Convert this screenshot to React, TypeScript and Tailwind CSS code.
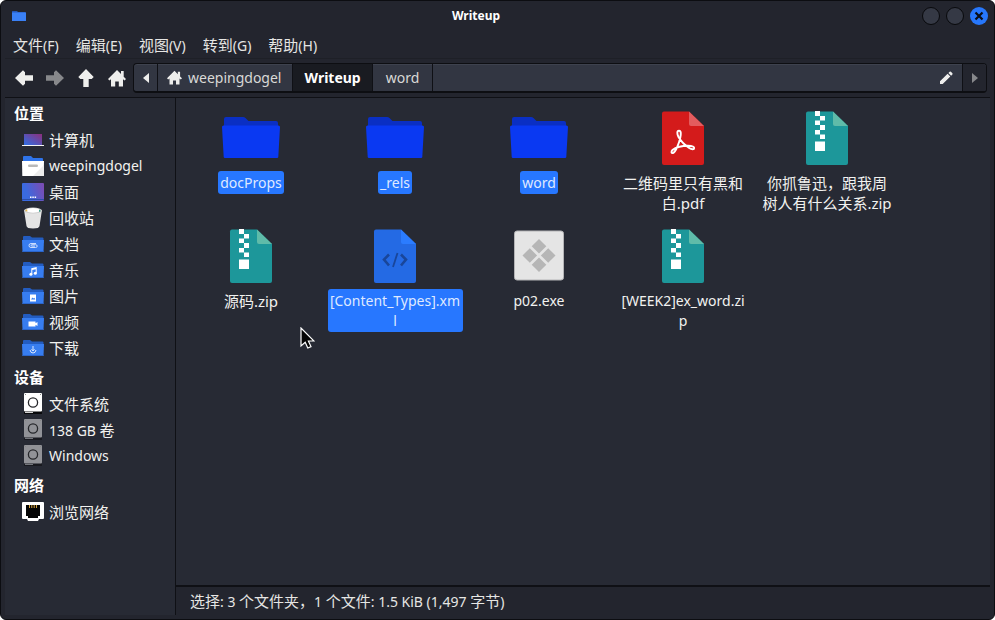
import React from "react";

const CJK = /([\u2e80-\u9fff\uff00-\uffef]+)/;

/** Latin runs use the base size, Chinese runs are one step larger. */
function Mixed({ text }: { text: string }) {
  return (
    <>
      {text.split(CJK).map((part, i) =>
        CJK.test(part) ? (
          <span key={i} className="text-[15px]">
            {part}
          </span>
        ) : (
          part
        ),
      )}
    </>
  );
}

/* ---------- toolbar icons ---------- */

function ArrowIcon({ dir }: { dir: "left" | "right" }) {
  return (
    <svg width="18" height="16" viewBox="0 0 18 16" fill="currentColor">
      <path
        d={
          dir === "left"
            ? "M0 8 8 .3l2 2v3h8v5.4h-8v3l-2 2z"
            : "M18 8 10 .3l-2 2v3H0v5.4h8v3l2 2z"
        }
      />
    </svg>
  );
}

function UpIcon() {
  return (
    <svg width="16" height="18" viewBox="0 0 16 18" fill="currentColor">
      <path d="M8 0l7.7 8-2 2h-3v8H5.3v-8h-3l-2-2z" />
    </svg>
  );
}

function HomeIcon({ size }: { size: number }) {
  return (
    <svg width={size} height={size} viewBox="0 0 18 18" fill="currentColor">
      <path d="M9 1 0 10l1.4 1.4L3 10.300V17.500h4.200V12.500h3.600v5H15v-7.200l1.600 1.100L18 10l-2.300-2.300V2H13v3z" />
    </svg>
  );
}

function PencilIcon() {
  return (
    <svg width="14" height="14" viewBox="0 0 14 14" fill="currentColor">
      <path d="M1 10.200 8.600 2.800l2.700 2.700L3.700 13H1zM9.400 2l1.300-1.300q.6-.4 1.200 0l1.500 1.500q.4.600 0 1.200l-1.300 1.300z" />
    </svg>
  );
}

/* ---------- sidebar icons, 22px ---------- */

function ComputerIcon() {
  return (
    <svg width="22" height="22" viewBox="0 0 22 22">
      <defs>
        <linearGradient id="screen" x1="0" y1="1" x2="1" y2="0">
          <stop offset="0" stopColor="#2f6fe6" />
          <stop offset="1" stopColor="#8d2f7c" />
        </linearGradient>
      </defs>
      <rect x="2" y="5" width="18" height="11" fill="url(#screen)" />
      <rect x="0" y="16" width="22" height="1" fill="#f4f4f4" />
    </svg>
  );
}

function UserFolderIcon() {
  return (
    <svg width="22" height="22" viewBox="0 0 22 22">
      <path d="M1 2q0-1 1-1h7l2 2h9q1 0 1 1v4H1z" fill="#2f74ea" />
      <path d="M0 6h22l-.3 15H.3z" fill="#fff" />
      <path d="M22 10v11H11z" fill="#ececec" />
      <rect x="6" y="9.500" width="10" height="2.500" rx="1.200" fill="#b9b9b9" />
    </svg>
  );
}

function DesktopIcon() {
  return (
    <svg width="22" height="22" viewBox="0 0 22 22">
      <defs>
        <linearGradient id="desk" x1="0" y1="0.600" x2="1" y2="0.300">
          <stop offset="0.200" stopColor="#3a6ae0" />
          <stop offset="1" stopColor="#7a4db4" />
        </linearGradient>
      </defs>
      <rect x="0" y="2" width="22" height="18" rx="1" fill="url(#desk)" />
      <rect x="0" y="18" width="22" height="1" fill="#2d4da8" />
      <path d="M8 15.500h1.500V17H8zM10.300 15.500h1.500V17h-1.500zM12.600 15.500h1.500V17h-1.500z" fill="#fff" />
    </svg>
  );
}

function TrashIcon() {
  return (
    <svg width="22" height="22" viewBox="0 0 22 22">
      <path d="M2 3h18l-2.500 16q-.3 2.500-6.500 2.500T4.500 19z" fill="#e4e4e4" />
      <ellipse cx="11" cy="3.500" rx="9" ry="3" fill="#c9c9c9" />
      <path d="M4 4q0-2 3-2.500 4-1 8 0 3 .5 3 2.500-2 1.700-7 1.700T4 4z" fill="#fff" />
      <path d="M3 4l2-2 .5 2.500z" fill="#e5b94f" />
      <path d="M17 2.500l2 1.500-2 1z" fill="#3da08d" />
    </svg>
  );
}

function BlueFolder({ children }: { children: React.ReactNode }) {
  return (
    <svg width="22" height="22" viewBox="0 0 22 22">
      <path d="M1 4q0-1 1-1h6l2 1.500h10.500q1 0 1 1V10H1z" fill="#235cc0" />
      <path d="M0 7h22l-.5 12H.5z" fill="#377df0" />
      <rect x=".5" y="18" width="21" height="1" fill="#2b66cd" />
      {children}
    </svg>
  );
}

const clip = (
  <path
    d="M14 10.500H9q-2 0-2 2t2 2h4.500q1.700 0 1.700-1.400T13.500 11.700H10q-.9 0-.9.700t.9.700h3"
    fill="none"
    stroke="#dbe8ff"
    strokeWidth=".9"
  />
);
const music = (
  <g fill="#fff">
    <path d="M9.300 9.200 14.700 8v6h-1v-3.800l-3.400.8v4h-1z" />
    <circle cx="8.900" cy="15.200" r="1.500" />
    <circle cx="13.300" cy="14.200" r="1.500" />
  </g>
);
const picture = (
  <g>
    <rect x="8" y="9.500" width="6" height="7" fill="#fff" />
    <path d="M9 14.500l1.500-2 1 1 .8-.7 1 1.700z" fill="#377df0" />
  </g>
);
const video = (
  <path d="M6.500 10.500h7v1.700l2-1.200v4l-2-1.200v1.700h-7z" fill="#fff" />
);
const download = (
  <path
    d="M11 9v5M9.500 12.200 11 14l1.500-1.800M8 13q.5 3 3 3t3-3"
    fill="none"
    stroke="#dbe8ff"
    strokeWidth="1"
  />
);

function DriveIcon({ dim }: { dim?: boolean }) {
  return (
    <svg width="22" height="22" viewBox="0 0 22 22">
      <rect x="2" y="18" width="18" height="3" fill={dim ? "#191a20" : "#08090b"} />
      <rect x="3" y="19" width="8" height="1" fill={dim ? "#74767c" : "#cfcfcf"} />
      <rect x="2" y="0" width="18" height="18.500" rx="1" fill={dim ? "#919297" : "#fff"} />
      <circle cx="11" cy="9.500" r="4.600" fill="none" stroke="#26272b" strokeWidth="1.300" />
      <rect x="3" y="1" width="1" height="1" fill="#888" />
      <rect x="18" y="1" width="1" height="1" fill="#888" />
    </svg>
  );
}

function NetworkIcon() {
  return (
    <svg width="22" height="22" viewBox="0 0 22 22">
      <path d="M1 1h20q1 0 1 1v15q0 1-1 1h-4l-1 2H6l-1-2H1q-1 0-1-1V2q0-1 1-1z" fill="#fff" />
      <path d="M4 4h14v11h-2v2H6v-2H4z" fill="#050505" />
      <path d="M7.500 4v3M9.800 4v3M12.200 4v3M14.500 4v3" stroke="#d8a640" strokeWidth="1" />
    </svg>
  );
}

/* ---------- file icons, 64px ---------- */

function FolderIcon() {
  return (
    <svg width="64" height="64" viewBox="0 0 64 64">
      <path d="M5 13q0-2 2-2h17q1.500 0 2.500 1l3 3H57q2 0 2 2v9H5z" fill="#0a2fc4" />
      <path d="M3 21q0-1.500 1.500-1.500h55q1.500 0 1.500 1.500l-1.700 30q0 1-1.300 1H6q-1.300 0-1.300-1z" fill="#0a39f2" />
    </svg>
  );
}

function Sheet({ base, fold, children }: { base: string; fold: string; children: React.ReactNode }) {
  return (
    <svg width="64" height="64" viewBox="0 0 64 64">
      <path d="M13 5.500h25L53 20v37q0 2-2 2H13q-2 0-2-2V7.500q0-2 2-2z" fill={base} />
      <path d="M38 5.500 53 20H40q-2 0-2-2z" fill={fold} />
      {children}
    </svg>
  );
}

function PdfIcon() {
  return (
    <Sheet base="#d41b1b" fold="#e35c5e">
      <path
        d="M27.500 31c-1.500-3-1.800-6.300.5-6.300s2 3.300 1.300 6.800c-1 5-4.500 14.500-7.300 15.500-1.800.5-2-1.500-.5-3 3-2.800 10.500-4.500 15.500-4.300 3 .1 6.200.6 6.200 2.300s-2.500 1.800-5 0c-4.500-3-8.700-7.500-10.700-11z"
        fill="none"
        stroke="#fff"
        strokeWidth="1.900"
      />
    </Sheet>
  );
}

function ZipIcon() {
  return (
    <Sheet base="#1d979a" fold="#5fbba9">
      <g fill="#fff">
        <rect x="20" y="5" width="5" height="5" />
        <rect x="25" y="10" width="5" height="4.500" />
        <rect x="20" y="14.500" width="5" height="4.500" />
        <rect x="25" y="19" width="5" height="5" />
        <rect x="20" y="24" width="5" height="4.500" />
        <rect x="25" y="28.500" width="5" height="4.500" />
        <rect x="20" y="35.500" width="10" height="9.500" />
      </g>
    </Sheet>
  );
}

function XmlIcon() {
  return (
    <Sheet base="#246ae4" fold="#2b7cff">
      <path
        d="M26 30.500 21 35.500 26 41.500M38 30.500 43 35.500 38 41.500"
        fill="none"
        stroke="#19469a"
        strokeWidth="2.600"
      />
      <path d="M34.500 29 30 43" stroke="#19469a" strokeWidth="1.800" />
    </Sheet>
  );
}

function ExeIcon() {
  return (
    <svg width="64" height="64" viewBox="0 0 64 64">
      <rect x="7.500" y="7" width="49" height="49" rx="2.500" fill="#e5e5e5" stroke="#b4b4b6" />
      <g fill="#b6b6b6">
        <path d="M32 15l7.300 7.300L32 29.600l-7.300-7.300z" />
        <path d="M32 33.400l7.300 7.300L32 48l-7.300-7.300z" />
        <path d="M22.800 24.200l7.300 7.300-7.300 7.300-7.300-7.300z" />
        <path d="M41.200 24.200l7.300 7.300-7.300 7.300-7.300-7.300z" />
      </g>
    </svg>
  );
}

/* ---------- data ---------- */

const menus = ["文件(F)", "编辑(E)", "视图(V)", "转到(G)", "帮助(H)"];

const groups = [
  {
    title: "位置",
    items: [
      { label: "计算机", icon: <ComputerIcon /> },
      { label: "weepingdogel", icon: <UserFolderIcon /> },
      { label: "桌面", icon: <DesktopIcon /> },
      { label: "回收站", icon: <TrashIcon /> },
      { label: "文档", icon: <BlueFolder>{clip}</BlueFolder> },
      { label: "音乐", icon: <BlueFolder>{music}</BlueFolder> },
      { label: "图片", icon: <BlueFolder>{picture}</BlueFolder> },
      { label: "视频", icon: <BlueFolder>{video}</BlueFolder> },
      { label: "下载", icon: <BlueFolder>{download}</BlueFolder> },
    ],
  },
  {
    title: "设备",
    items: [
      { label: "文件系统", icon: <DriveIcon /> },
      { label: "138 GB 卷", icon: <DriveIcon dim /> },
      { label: "Windows", icon: <DriveIcon dim /> },
    ],
  },
  {
    title: "网络",
    items: [{ label: "浏览网络", icon: <NetworkIcon /> }],
  },
];

const files = [
  { name: "docProps", icon: <FolderIcon />, selected: true },
  { name: "_rels", icon: <FolderIcon />, selected: true },
  { name: "word", icon: <FolderIcon />, selected: true },
  { name: "二维码里只有黑和白.pdf", icon: <PdfIcon />, selected: false },
  { name: "你抓鲁迅，跟我周树人有什么关系.zip", icon: <ZipIcon />, selected: false },
  { name: "源码.zip", icon: <ZipIcon />, selected: false },
  { name: "[Content_Types].xml", icon: <XmlIcon />, selected: true },
  { name: "p02.exe", icon: <ExeIcon />, selected: false },
  { name: "[WEEK2]ex_word.zip", icon: <ZipIcon />, selected: false },
];

/* ---------- window ---------- */

function TitleBar() {
  return (
    <header className="flex h-[30px] shrink-0 items-center pl-[11px] pr-[6px]">
      <svg width="14" height="12" viewBox="0 0 14 12">
        <path d="M0 1.500Q0 1 .5 1H5l1 1h7.500v3H0z" fill="#2458b8" />
        <path d="M0 2.500h14V11H0z" fill="#3a80f5" />
      </svg>
      <h1 className="grow pl-1 text-center text-[12px] font-bold text-white">Writeup</h1>
      <div className="flex items-center gap-[6px]">
        <button aria-label="最小化" className="size-[18px] rounded-full border border-[#08090c] bg-[#353945]" />
        <button aria-label="最大化" className="size-[18px] rounded-full border border-[#08090c] bg-[#353945]" />
        <button
          aria-label="关闭"
          className="flex size-[18px] items-center justify-center rounded-full bg-[#2777fb]"
        >
          <svg width="10" height="10" viewBox="0 0 10 10">
            <path d="M1.500 1.500l7 7M8.500 1.500l-7 7" stroke="#0b0d14" strokeWidth="2.200" />
          </svg>
        </button>
      </div>
    </header>
  );
}

function Toolbar() {
  const tool = "flex h-[30px] w-[31px] items-center justify-center";
  const crumb = "flex items-center border-r border-[#0f1015]";
  return (
    <div className="flex h-[38px] shrink-0 items-center px-[7px] text-[#eeeeec]">
      <button aria-label="后退" className={tool}>
        <ArrowIcon dir="left" />
      </button>
      <button aria-label="前进" disabled className={`${tool} text-[#87888b]`}>
        <ArrowIcon dir="right" />
      </button>
      <button aria-label="向上" className={tool}>
        <UpIcon />
      </button>
      <button aria-label="主目录" className={tool}>
        <HomeIcon size={18} />
      </button>
      <nav
        aria-label="路径"
        className="ml-px flex h-[30px] grow items-stretch overflow-hidden rounded-[4px] border border-b-2 border-[#0d0e12] bg-[#323642] text-[#d9d9d7] [box-shadow:inset_0_1px_0_#3e424e]"
      >
        <button aria-label="向左滚动" className={`${crumb} w-6 justify-center`}>
          <svg width="6" height="10" viewBox="0 0 6 10" fill="#eeeeec">
            <path d="M6 0v10L0 5z" />
          </svg>
        </button>
        <button className={`${crumb} gap-[6px] pl-[9px] pr-[11px]`}>
          <span className="text-[#eeeeec]">
            <HomeIcon size={15} />
          </span>
          weepingdogel
        </button>
        <button aria-current="page" className={`${crumb} bg-[#191b21] px-[11px] font-bold text-white`}>
          Writeup
        </button>
        <button className={`${crumb} px-[13px]`}>word</button>
        <span className="grow" />
        <button aria-label="编辑路径" className={`${crumb} pr-[9px] text-[#eeeeec]`}>
          <PencilIcon />
        </button>
        <button
          aria-label="向右滚动"
          disabled
          className="flex w-[23px] items-center justify-center bg-[#23252e]"
        >
          <svg width="6" height="10" viewBox="0 0 6 10" fill="#87888b">
            <path d="M0 0v10l6-5z" />
          </svg>
        </button>
      </nav>
    </div>
  );
}

function Sidebar() {
  return (
    <aside className="flex w-[171px] shrink-0 flex-col gap-px border-r border-[#0f1015] text-[#f2f2f0]">
      {groups.map((group) => (
        <section key={group.title}>
          <h2 className="flex h-[29px] items-center pl-[9px] text-[15px] font-bold text-white">{group.title}</h2>
          <ul>
            {group.items.map((item) => (
              <li key={item.label}>
                <button className="flex h-[26px] w-full items-center gap-[5px] pl-[17px] text-left">
                  {item.icon}
                  <span>
                    <Mixed text={item.label} />
                  </span>
                </button>
              </li>
            ))}
          </ul>
        </section>
      ))}
    </aside>
  );
}

function FileGrid() {
  return (
    <ul className="grid grow auto-rows-[118px] grid-cols-[repeat(auto-fill,144px)] content-start overflow-hidden pl-[3px] pt-2 text-[#f2f2f0]">
      {files.map((file) => (
        <li key={file.name} className="flex justify-center">
          <button className="flex w-[135px] flex-col items-center gap-px" aria-pressed={file.selected}>
            {file.icon}
            <span
              className={`rounded-[3px] px-[2px] pt-[2px] pb-px leading-5 break-all ${
                file.selected ? "bg-[#2777ff] text-[#dfe9ff]" : ""
              } ${CJK.test(file.name) ? "text-[15px]" : ""}`}
            >
              {file.name}
            </span>
          </button>
        </li>
      ))}
    </ul>
  );
}

export default function App() {
  return (
    <div className="h-screen bg-white">
      <div className="relative flex h-full flex-col overflow-hidden rounded-[6px] border border-[#0c0d11] bg-[#23252e] font-['Noto_Sans','Noto_Sans_CJK_SC',sans-serif] text-[14px] leading-5 text-[#e6e6e4]">
        <TitleBar />
        <nav aria-label="菜单" className="mx-1 flex h-[28px] shrink-0 items-center gap-px border-b border-[#1e2027] pt-[2px]">
          {menus.map((menu) => (
            <button key={menu} className="px-2">
              <Mixed text={menu} />
            </button>
          ))}
        </nav>
        <Toolbar />
        <div className="mx-1 flex min-h-0 grow border-t border-[#0f1015] bg-[#272a34]">
          <Sidebar />
          <main className="flex min-w-0 grow flex-col">
            <FileGrid />
            <footer className="flex h-[30px] shrink-0 items-center border-t-2 border-[#0f1015] bg-[#23252e] pl-[14px]">
              <p>
                <Mixed text="选择: 3 个文件夹，1 个文件: 1.5 KiB (1,497 字节)" />
              </p>
            </footer>
          </main>
        </div>
        <div className="h-1 shrink-0" />
        <svg className="absolute left-[299px] top-[326px]" width="15" height="22" viewBox="0 0 15 22">
          <path
            d="M1 1v18l4.200-3.800 2.600 5.800 3.200-1.400-2.600-5.600H14z"
            fill="#050505"
            stroke="#fff"
            strokeWidth="1.200"
          />
        </svg>
      </div>
    </div>
  );
}
